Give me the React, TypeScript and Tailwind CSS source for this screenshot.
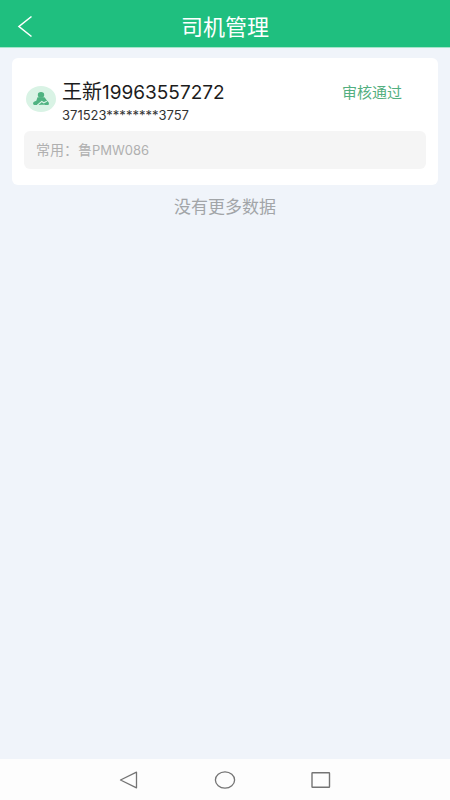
type Driver = {
  name: string;
  phone: string;
  idNumber: string;
  status: string;
  region: string;
  plate: string;
};

const drivers: Driver[] = [
  {
    name: "王新",
    phone: "19963557272",
    idNumber: "371523********3757",
    status: "审核通过",
    region: "鲁",
    plate: "PMW086",
  },
];

function Header() {
  return (
    <header className="relative flex h-12 items-center justify-center border-b border-[#a5e4ca] bg-[#1fbf7f] text-white">
      <button type="button" aria-label="返回" className="absolute left-4 flex h-8 w-6 items-center pt-1">
        <svg viewBox="0 0 18 24" className="h-6 w-[18px]" fill="none" stroke="currentColor" strokeWidth="1.6">
          <path d="M15.5 2.5 3 12.5 15.5 22.5" />
        </svg>
      </button>
      <h1 className="pt-1.5 text-[22px] leading-8">司机管理</h1>
    </header>
  );
}

function DriverIcon() {
  return (
    <svg viewBox="0 0 30 26" className="h-[26px] w-[30px] shrink-0" aria-hidden="true">
      <ellipse cx="15" cy="13" rx="15" ry="13" fill="#d9f3e5" />
      <path d="M11.500 11.300h7l3.200 4.200c1.300.4 1.800 3.300.4 3.600H8.300c-1.600-.3-1.600-2.900-.3-3.400l2.300-.9Z" fill="#4fb381" />
      <path d="m11.300 19.300 4.500-3.900 2 1.400 3-1.500M14.300 19.300h4.700" fill="none" stroke="#d9f3e5" strokeWidth="1.2" />
      <ellipse cx="15" cy="8.900" rx="3.200" ry="2.800" fill="#4fb381" />
    </svg>
  );
}

function DriverCard({ driver }: { driver: Driver }) {
  return (
    <article className="rounded-md bg-white px-3 pt-5 pb-4">
      <div className="flex items-start pl-0.5">
        <div className="pt-2">
          <DriverIcon />
        </div>
        <div className="ml-1.5 flex-1">
          <div className="flex items-center justify-between pr-6">
            <h2 className="text-xl leading-7 text-[#1c1c1c]">
              {driver.name}
              <span className="text-[19px] leading-7">{driver.phone}</span>
            </h2>
            <span className="text-[15px] leading-7 text-[#53af80]">{driver.status}</span>
          </div>
          <p className="text-[13px] leading-4 text-[#333333]">{driver.idNumber}</p>
        </div>
      </div>
      <p className="mt-2 rounded-md bg-[#f5f5f5] px-3 text-sm leading-[37px] text-[#b0b0b0]">
        常用：{driver.region}
        <span className="text-[13px]">{driver.plate}</span>
      </p>
    </article>
  );
}

function SystemBar() {
  return (
    <nav className="flex h-[41px] items-center justify-center gap-[72px] bg-[#fdfdfd] text-[#747474]">
      <button type="button" aria-label="后退" className="flex w-6 justify-center">
        <svg viewBox="0 0 24 20" className="h-5 w-6" fill="none" stroke="currentColor" strokeWidth="1.3" strokeLinejoin="round">
          <path d="M19.500 2.200v15.600L3.500 10Z" />
        </svg>
      </button>
      <button type="button" aria-label="主屏幕" className="flex w-6 justify-center">
        <svg viewBox="0 0 24 20" className="h-5 w-6" fill="none" stroke="currentColor" strokeWidth="1.3">
          <ellipse cx="12" cy="10" rx="9.600" ry="8.200" />
        </svg>
      </button>
      <button type="button" aria-label="最近任务" className="flex w-6 justify-center">
        <svg viewBox="0 0 24 20" className="h-5 w-6" fill="none" stroke="currentColor" strokeWidth="1.4" strokeLinejoin="round">
          <rect x="3" y="2.700" width="17.500" height="14.600" rx=".5" />
        </svg>
      </button>
    </nav>
  );
}

export default function App() {
  return (
    <div className="flex min-h-screen flex-col bg-[#f0f4fa] font-[Inter,'Noto_Sans_CJK_SC',sans-serif]">
      <Header />
      <main className="flex-1 px-3 pt-2.5">
        {drivers.map((driver) => (
          <DriverCard key={driver.idNumber} driver={driver} />
        ))}
        <p className="mt-2 text-center text-[17px] leading-7 text-[#a2a5a8]">没有更多数据</p>
      </main>
      <SystemBar />
    </div>
  );
}
